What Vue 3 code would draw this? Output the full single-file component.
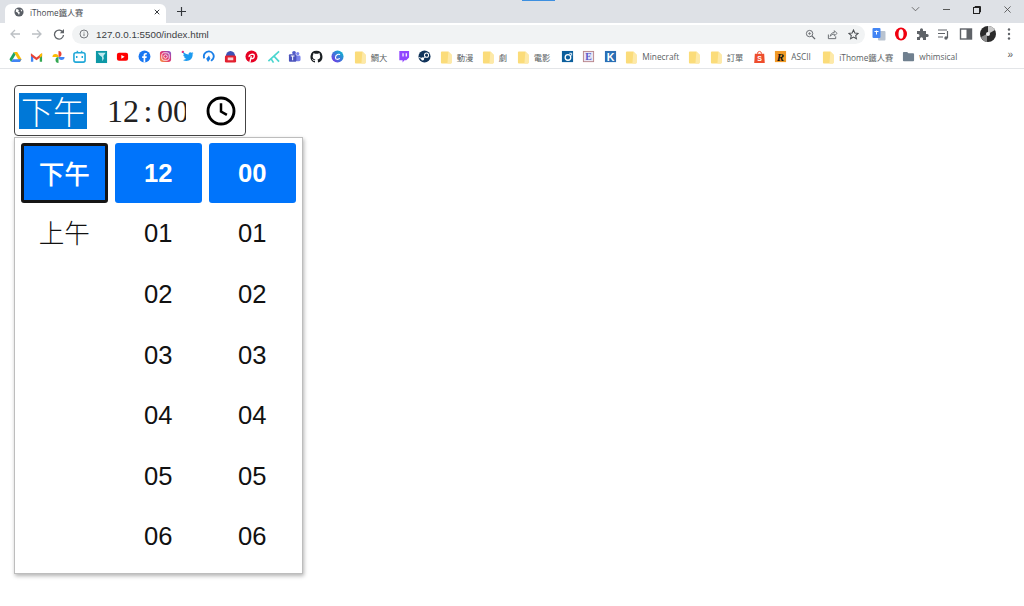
<script setup>
const folder = '<path d="M2 1.500h7l3.500 3.500v8.500a1 1 0 0 1-1 1H2a1 1 0 0 1-1-1v-11a1 1 0 0 1 1-1z" fill="#fbdc7a"/><path d="M9 1.500l3.500 3.500v8.500a1 1 0 0 1-1 1H8z" fill="#fde9a8"/>'
const icons = {
  drive: '<path d="M5.200 2h3.600l4.700 8-1.800 3z" fill="#fbbc04"/><path d="M5.200 2L.5 10l1.800 3 4.700-8z" fill="#1ea362"/><path d="M2.300 13l1.800-3h9.400l-1.800 3z" fill="#4285f4"/>',
  gmail: '<path d="M1 4v8.500h2.500V6.500z" fill="#4285f4"/><path d="M13 4v8.500h-2.500V6.500z" fill="#34a853"/><path d="M1 3.500L7 8l6-4.500v3L7 11 1 6.500z" fill="#ea4335"/><path d="M13 3.500v3l-2.500 1.800V4.500z" fill="#fbbc04"/>',
  photos: '<path d="M7 7.500V1a3.250 3.250 0 0 1 3.250 3.250 3.250 3.250 0 0 1-3.250 3.250z" fill="#ea4335"/><path d="M7 7.500h6.500a3.250 3.250 0 0 1-6.500 0z" fill="#4285f4"/><path d="M7 7.500V14a3.250 3.250 0 0 1 0-6.500z" fill="#34a853"/><path d="M7 7.500H.5a3.250 3.250 0 0 1 6.500 0z" fill="#fbbc04"/>',
  bili: '<path d="M4 1l2 2M10 1L8 3" stroke="#20a8d8" stroke-width="1.200"/><rect x="1" y="3" width="12" height="10" rx="2" fill="none" stroke="#20a8d8" stroke-width="1.700"/><path d="M4 6.500v2M10 6.500v2" stroke="#20a8d8" stroke-width="1.600"/>',
  teal: '<rect x="1" y="1" width="12" height="13" fill="#0d98a6"/><path d="M3 3h8.500L9 6.500 9.500 9 8 12 7.500 7.500 5 5.500z" fill="#bfeaf0"/>',
  yt: '<rect x="1" y="3" width="12" height="8.600" rx="2.200" fill="#f00"/><path d="M5.700 5.300l3.600 2-3.600 2z" fill="#fff"/>',
  fb: '<circle cx="7" cy="7" r="6.400" fill="#1877f2"/><path d="M6 13.300V8.600H4.500V6.800H6V5.600C6 4 7 3.200 8.300 3.200l1.200.1v1.600h-.8c-.7 0-.9.4-.9 1v.9h1.700l-.3 1.800H7.800v4.700z" fill="#fff"/>',
  ig: '<defs><linearGradient id="ig" x1="0" y1="1" x2="1" y2="0"><stop offset="0" stop-color="#f9a03f"/><stop offset=".5" stop-color="#e1306c"/><stop offset="1" stop-color="#7c5cd6"/></linearGradient></defs><rect x="1" y="1" width="12" height="12" rx="3" fill="url(#ig)"/><rect x="3" y="3" width="8" height="8" rx="2.300" fill="none" stroke="#fff" stroke-width=".9"/><circle cx="7" cy="7" r="1.900" fill="none" stroke="#fff" stroke-width=".9"/>',
  tw: '<circle cx="2" cy="2" r="1.300" fill="#e8307c"/><path d="M13.500 3.400c-.5.2-1 .4-1.500.4.5-.3 1-.8 1.100-1.400-.5.3-1 .5-1.600.6C10 1.500 7.800 2.500 8.300 4.800 6 4.700 4 3.600 2.800 2c-.7 1.200-.3 2.700.8 3.400-.4 0-.8-.1-1.200-.3 0 1.200.9 2.300 2.100 2.500-.4.100-.8.100-1.100 0 .3 1 1.300 1.700 2.400 1.800C4.700 10.300 3.300 10.700 2 10.600c4.500 2.800 11-.1 10.500-6.100.4-.3.700-.7 1-1.100z" fill="#1d9bf0"/>',
  swirl: '<path d="M2.500 9A5.300 5.300 0 1 1 11.800 9.600L9.800 11.600" fill="none" stroke="#1a7fe8" stroke-width="2"/><path d="M4.500 9.500L7.500 6l1.500 3.500L6.500 13z" fill="#1a7fe8"/>',
  bag: '<path d="M2 7a5 6 0 0 1 10 0z" fill="#3f51b5"/><rect x="1" y="6" width="12" height="7.500" rx="1.500" fill="#e3202f"/><rect x="4" y="8" width="6" height="3" fill="#fff" opacity=".8"/>',
  pin: '<circle cx="7" cy="7" r="6.500" fill="#e60023"/><path d="M5.300 13l1.500-6.500M4.500 7.500C3.800 4.800 10 3 10 6.500 10 9.500 7 9.800 6.300 8.500" fill="none" stroke="#fff" stroke-width="1.500"/>',
  kite: '<path d="M13 1.500L1.500 12M7.500 6.500L13 12.500M4.500 9.500L7 13.500" fill="none" stroke="#4cd6d0" stroke-width="1.800"/>',
  teams: '<circle cx="10.500" cy="3.800" r="1.700" fill="#7b83eb"/><circle cx="6.500" cy="3" r="2" fill="#5059c9"/><rect x="8" y="6" width="5.500" height="6" rx="1.500" fill="#7b83eb"/><rect x="1" y="4.500" width="8" height="8" rx="1" fill="#4b53bc"/><path d="M3 6.500h4M5 6.500v4.500" stroke="#fff" stroke-width="1.100"/>',
  gh: '<path d="M7 .8a6.400 6.400 0 0 0-2 12.500c.3 0 .4-.1.400-.3v-1.200c-1.800.4-2.200-.8-2.200-.8-.3-.7-.7-.9-.7-.9-.6-.4 0-.4 0-.4.600 0 1 .7 1 .7.600 1 1.500.7 1.900.5 0-.4.200-.7.400-.9-1.400-.2-2.900-.7-2.900-3.100 0-.7.200-1.300.6-1.700 0-.2-.3-.8.100-1.700 0 0 .5-.2 1.800.6a6 6 0 0 1 3.200 0c1.200-.8 1.800-.6 1.800-.6.300.9.100 1.500 0 1.700.4.400.6 1 .6 1.700 0 2.400-1.500 2.900-2.900 3.100.2.200.4.600.4 1.200V13c0 .2.100.3.400.3A6.400 6.400 0 0 0 7 .8z" fill="#1b1f23"/>',
  canva: '<defs><linearGradient id="cv" x1="0" y1="1" x2="1" y2="0"><stop offset="0" stop-color="#7d2ae8"/><stop offset="1" stop-color="#00c4cc"/></linearGradient></defs><circle cx="7" cy="7" r="6.500" fill="url(#cv)"/><path d="M9.500 5.200C9 3.800 5 4.500 4.800 8c-.1 2.500 3 2.500 4.700 1" fill="none" stroke="#fff" stroke-width="1.200"/>',
  twitch: '<path d="M2.500 1H13v7l-3 3H8l-2 2.300V11H2.500z" fill="#9146ff"/><path d="M6.500 3.500v3.500M10 3.500v3.500" stroke="#fff" stroke-width="1.300"/>',
  steam: '<circle cx="7" cy="7" r="6.500" fill="#10335a"/><circle cx="9.200" cy="5.500" r="2.200" fill="none" stroke="#fff" stroke-width="1.100"/><circle cx="5" cy="9.500" r="1.700" fill="#fff"/><path d="M1 8l4 1.500 3-2.500" fill="none" stroke="#fff" stroke-width="1"/>',
  blue: '<rect x="1" y="1" width="12" height="12" fill="#0c5f9c"/><circle cx="7.500" cy="8" r="3" fill="none" stroke="#fff" stroke-width="1.400"/><path d="M9 3.500h2.500V6" fill="none" stroke="#fff"/>',
  esq: '<rect x="1.500" y="1.500" width="11" height="11" fill="#e8e6f6" stroke="#b8858a"/><text x="7" y="11" text-anchor="middle" font-family="Liberation Serif" font-size="10.500" font-weight="700" fill="#5a5ac8">E</text>',
  k: '<rect x="1" y="1" width="12" height="12" fill="#2a6fb5"/><text x="7" y="11.500" text-anchor="middle" font-family="Liberation Sans" font-size="11.500" font-weight="700" fill="#fff">K</text>',
  shop: '<path d="M4.800 4a2.200 2.500 0 0 1 4.400 0" fill="none" stroke="#ee4d2d"/><path d="M2 4h10l.7 10H1.300z" fill="#ee4d2d"/><text x="7" y="12" text-anchor="middle" font-family="Liberation Sans" font-size="7.500" font-weight="700" fill="#fff">S</text>',
  r: '<rect x="1" y="1" width="12" height="12" fill="#f09a28"/><text x="7" y="11.500" text-anchor="middle" font-family="Liberation Serif" font-style="italic" font-size="12" font-weight="700" fill="#111">R</text>',
  grey: '<path d="M1 3a1 1 0 0 1 1-1h3.500l1.500 1.500h5a1 1 0 0 1 1 1V11a1 1 0 0 1-1 1H2a1 1 0 0 1-1-1z" fill="#70808f"/>',
  folder
}
const bookmarks = [
  { icon: 'drive' }, { icon: 'gmail' }, { icon: 'photos' }, { icon: 'bili' }, { icon: 'teal' }, { icon: 'yt' },
  { icon: 'fb' }, { icon: 'ig' }, { icon: 'tw' }, { icon: 'swirl' }, { icon: 'bag' }, { icon: 'pin' },
  { icon: 'kite' }, { icon: 'teams' }, { icon: 'gh' }, { icon: 'canva', w: 22.5 },
  { icon: 'folder', label: '鯛大', w: 43 }, { icon: 'twitch' }, { icon: 'steam' },
  { icon: 'folder', label: '動漫', w: 42 }, { icon: 'folder', label: '劇', w: 35 },
  { icon: 'folder', label: '電影', w: 44 }, { icon: 'blue' }, { icon: 'esq' }, { icon: 'k' },
  { icon: 'folder', label: 'Minecraft', w: 63 }, { icon: 'folder' },
  { icon: 'folder', label: '訂單', w: 43 }, { icon: 'shop' },
  { icon: 'r', label: 'ASCII', w: 48 }, { icon: 'folder', label: 'iThome鐵人賽', w: 80 },
  { icon: 'grey', label: 'whimsical', w: 90 }
]
const periods = ['下午', '上午']
const nums = ['01', '02', '03', '04', '05', '06']
const columns = [
  { selected: '下午', items: ['上午'], focused: true },
  { selected: '12', items: nums },
  { selected: '00', items: nums }
]
</script>

<template>
  <div class="page">
    <header class="chrome">
      <div class="sliver"></div>
      <div class="tabstrip">
        <div class="tab">
          <svg class="fav" viewBox="0 0 12 12"><circle cx="6" cy="6" r="5.500" fill="#5a5f66"/><path d="M3 2l3 1.500-1 2 2 1-1 3-1.500-2.500L2 5.500zM8 2.500l2 2-1.500 1z" fill="#fff"/></svg>
          <span class="tab-title">iThome鐵人賽</span>
          <svg class="tab-x" viewBox="0 0 8 8"><path d="M1 1l6 6M7 1L1 7" stroke="#33373b" stroke-width="1.300"/></svg>
        </div>
        <svg class="plus" viewBox="0 0 10 10"><path d="M5 0v10M0 5h10" stroke="#33373b" stroke-width="1.300"/></svg>
        <div class="win">
          <svg class="w1" viewBox="0 0 10 6"><path d="M1 1l4 4 4-4" fill="none" stroke="#555" stroke-width=".9"/></svg>
          <svg class="w2" viewBox="0 0 8 8"><path d="M0 4h8" stroke="#444" stroke-width="1"/></svg>
          <svg class="w3" viewBox="0 0 8 8"><rect x=".5" y="1.500" width="6" height="6" fill="none" stroke="#222"/><path d="M2 1V.5h5.500V6H7" fill="none" stroke="#222"/></svg>
          <svg class="w4" viewBox="0 0 8 8"><path d="M.5.500l7 7M7.500.500l-7 7" stroke="#444" stroke-width=".9"/></svg>
        </div>
      </div>
      <div class="toolbar">
        <div class="nav">
          <svg viewBox="0 0 12 12"><path d="M11 6H2M6 2L2 6l4 4" fill="none" stroke="#bcc0c4" stroke-width="1.300"/></svg>
          <svg viewBox="0 0 12 12"><path d="M1 6h9M6 2l4 4-4 4" fill="none" stroke="#bcc0c4" stroke-width="1.300"/></svg>
          <svg viewBox="0 0 12 12"><path d="M10 4.500A4.500 4.500 0 1 0 10.500 7" fill="none" stroke="#5f6368" stroke-width="1.300"/><path d="M11 1v4.200H6.800z" fill="#5f6368"/></svg>
        </div>
        <div class="omnibox">
          <svg class="info" viewBox="0 0 12 12"><circle cx="6" cy="6" r="4.800" fill="none" stroke="#5f6368"/><path d="M6 5.300v3.200M6 3.300v1" stroke="#5f6368"/></svg>
          <span class="url">127.0.0.1:5500/index.html</span>
          <div class="omni-actions">
            <svg viewBox="0 0 12 12"><circle cx="5" cy="5" r="3.500" fill="none" stroke="#5f6368"/><path d="M7.800 7.800L11 11" stroke="#5f6368" stroke-width="1.400"/><path d="M3.300 5h3.400M5 3.300v3.400" stroke="#5f6368" stroke-width=".7"/></svg>
            <svg viewBox="0 0 12 12"><path d="M1.500 6v4.500h8V8" fill="none" stroke="#5f6368"/><path d="M3.500 8c.3-3 2.500-4.200 4.500-4.200V1.800L11 4.800 8 7.500V5.600c-2 0-3.500.7-4.500 2.400z" fill="none" stroke="#5f6368" stroke-width=".9"/></svg>
            <svg viewBox="0 0 12 12"><path d="M6 1l1.500 3.300 3.600.4-2.700 2.400.8 3.600L6 8.900 2.800 10.700l.8-3.600L.9 4.700l3.600-.4z" fill="none" stroke="#4a4e52" stroke-width="1.100"/></svg>
          </div>
        </div>
        <div class="ext">
          <svg viewBox="0 0 14 14"><rect x="6" y="4" width="7.500" height="9.500" rx="1" fill="#b9c3d0"/><rect x=".5" y="1" width="8" height="10" rx="1" fill="#4285f4"/><path d="M2.500 4.500h4M4.500 3.500v4" stroke="#fff"/></svg>
          <svg viewBox="0 0 14 14"><ellipse cx="7" cy="7" rx="6" ry="6.500" fill="#f0000f"/><ellipse cx="7" cy="7" rx="2.500" ry="4.700" fill="#fff"/></svg>
          <svg viewBox="0 0 14 14"><path d="M2 4h3V2.700a1.500 1.500 0 0 1 3 0V4h3v3h1.200a1.500 1.500 0 0 1 0 3H11v3H8v-1.200a1.500 1.500 0 0 0-3 0V13H2v-3h1a1.500 1.500 0 0 0 0-3H2z" fill="#5f6368"/></svg>
          <svg viewBox="0 0 14 14"><path d="M1 3h9M1 6.500h7M1 10h5" stroke="#5f6368" stroke-width="1.200"/><path d="M10.500 4v7" stroke="#5f6368" stroke-width="1.200"/><circle cx="9" cy="11" r="1.700" fill="#5f6368"/></svg>
          <svg viewBox="0 0 14 14"><rect x="1.500" y="2" width="11" height="10" fill="none" stroke="#5f6368" stroke-width="1.400"/><rect x="7.500" y="2" width="5" height="10" fill="#5f6368"/></svg>
          <svg viewBox="0 0 16 16"><circle cx="8" cy="8" r="8" fill="#2a2a2a"/><path d="M8 8l7-4a8 8 0 0 0-7-4z" fill="#c9c9c9"/><path d="M1 11l6-3v8a8 8 0 0 1-6-5z" fill="#8a8a8a"/><circle cx="8" cy="8" r="2" fill="#eee"/></svg>
          <svg viewBox="0 0 14 14"><circle cx="7" cy="2.500" r="1.200" fill="#5f6368"/><circle cx="7" cy="7" r="1.200" fill="#5f6368"/><circle cx="7" cy="11.500" r="1.200" fill="#5f6368"/></svg>
        </div>
      </div>
      <nav class="bookmarks">
        <div v-for="(b, i) in bookmarks" :key="i" class="bm" :style="b.w ? { width: b.w + 'px' } : null">
          <span class="bm-slot"><svg class="bm-icon" viewBox="0 0 14 15" v-html="icons[b.icon]"></svg></span>
          <span v-if="b.label" class="bm-label">{{ b.label }}</span>
        </div>
        <span class="more">»</span>
      </nav>
    </header>

    <main class="main">
      <div class="picker">
        <div class="field">
          <span class="period">{{ periods[0] }}</span>
          <div class="time"><span class="hh">12</span><span class="colon">:</span><span class="mm">00</span></div>
          <svg class="clock" viewBox="0 0 24 24"><circle cx="12" cy="12" r="10.400" fill="none" stroke="#000" stroke-width="2.300"/><path d="M12 5.800V12.400l4.700 2.700" fill="none" stroke="#000" stroke-width="2"/></svg>
        </div>
        <div class="panel">
          <div v-for="col in columns" :key="col.selected" class="col" :class="{ cjk: col.focused }">
            <div class="cell selected" :class="{ focused: col.focused }">{{ col.selected }}</div>
            <div v-for="item in col.items" :key="item" class="cell">{{ item }}</div>
          </div>
        </div>
      </div>
    </main>
  </div>
</template>

<style>
html, body { margin: 0; background: #fff; }
</style>

<style scoped>
.page { width: 1024px; height: 606px; overflow: hidden; font-family: "Liberation Sans", "Noto Sans CJK TC", sans-serif; background: #fff; }
.chrome { position: relative; border-bottom: 1px solid #e3e5e8; }
.sliver { position: absolute; left: 522px; top: 0; width: 33px; height: 1px; background: #3d8fe0; }
.tabstrip { height: 23px; background: #dee1e6; display: flex; align-items: flex-end; padding-left: 5px; box-sizing: border-box; }
.tab { width: 161px; height: 19px; background: #fff; border-radius: 6px 6px 0 0; display: flex; align-items: center; padding: 0 6px 4px 9px; box-sizing: border-box; }
.fav { width: 10px; height: 10px; }
.tab-title { margin-left: 6px; font: 8.200px "Open Sans", "Noto Sans CJK TC", sans-serif; color: #45494e; flex: 1; }
.tab-x { width: 6px; height: 6px; }
.plus { width: 9px; height: 9px; margin: 0 0 7px 11px; }
.win { position: absolute; top: 0; right: 0; height: 18px; width: 120px; display: flex; align-items: center; }
.win svg { position: absolute; top: 6px; }
.w1 { left: 7px; width: 9px; height: 6px; }
.w2 { left: 39px; width: 7px; height: 7px; }
.w3 { left: 69px; width: 8px; height: 8px; }
.w4 { left: 100px; width: 7px; height: 7px; }
.toolbar { height: 22px; background: #fff; display: flex; align-items: center; }
.nav { display: flex; gap: 10px; padding-left: 9px; width: 72px; box-sizing: border-box; flex: none; }
.nav svg { width: 12px; height: 12px; }
.omnibox { width: 793px; height: 19px; border-radius: 10px; background: #f1f3f4; display: flex; align-items: center; padding-left: 7px; box-sizing: border-box; flex: none; }
.info { width: 10px; height: 10px; }
.url { margin-left: 7px; font: 9.800px "Liberation Sans", sans-serif; color: #3c4043; flex: 1; }
.omni-actions { display: flex; gap: 10.500px; padding-right: 6px; }
.omni-actions svg { width: 11px; height: 11px; }
.ext { display: flex; align-items: center; padding-left: 7px; }
.ext svg { width: 14px; height: 14px; margin-right: 7.700px; flex: none; }
.ext svg:nth-child(6) { width: 16px; height: 16px; margin-right: 6px; }
.ext svg:last-child { margin-right: 0; }
.bookmarks { position: relative; height: 23px; display: flex; align-items: center; padding-left: 4.250px; background: #fff; }
.bm { width: 21.500px; display: flex; align-items: center; flex: none; }
.bm-slot { width: 21.500px; display: flex; justify-content: center; flex: none; }
.bm-icon { width: 13px; height: 14px; display: block; }
.bm-label { font: 8.300px "Open Sans", "Noto Sans CJK TC", sans-serif; color: #5b5f64; white-space: nowrap; }
.more { position: absolute; right: 11px; top: 4px; font: 10px "Liberation Sans", sans-serif; color: #555; }
.main { padding: 16px 14px 0; }
.picker { width: 289px; }
.field { width: 232px; height: 51px; box-sizing: border-box; border: 1px solid #444; border-radius: 4px; display: flex; align-items: center; padding-left: 4px; background: #fff; }
.period { width: 68px; height: 36px; flex: none; background: #0078d7; color: #fff; font: 300 32px/35px "Noto Sans CJK TC", sans-serif; text-align: center; }
.time { width: 79px; margin-left: 20px; display: flex; overflow: hidden; font: 32px/36px "Liberation Serif", serif; color: #222; flex: none; }
.hh, .colon, .mm { flex: none; }
.colon { width: 22px; text-align: center; margin-left: -2px; }
.mm { margin-left: -2px; }
.clock { width: 30px; height: 30px; margin-left: 20px; flex: none; }
.panel { margin-top: 1px; box-sizing: border-box; width: 288.500px; height: 437px; border: 1px solid #bdbdbd; box-shadow: 1px 2px 4px rgba(0, 0, 0, .3); background: #fff; padding: 5px 5.500px; display: grid; grid-template-columns: repeat(3, 87.500px); column-gap: 6.500px; overflow: hidden; }
.col { display: flex; flex-direction: column; }
.cell { height: 60.600px; flex: none; box-sizing: border-box; display: flex; align-items: center; justify-content: center; font-size: 25.600px; color: #111; border-radius: 3px; }
.cjk .cell { padding-bottom: 4px; font-weight: 300; }
.selected { background: #0074fb; color: #fff; font-weight: 700; height: 60px; margin-bottom: .6px; }
.cjk .cell.focused { border: 3px solid #151515; font-weight: 500; padding-bottom: 1px; color: #fff; }
</style>
